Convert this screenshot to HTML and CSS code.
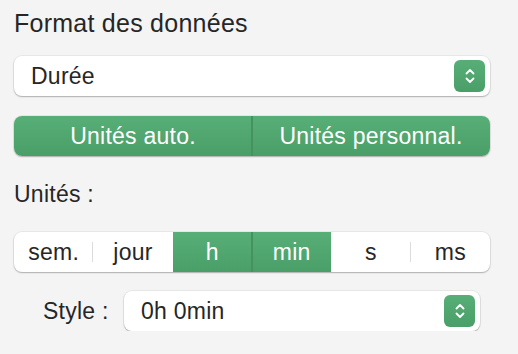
FILE: index.html
```html
<!DOCTYPE html>
<html>
<head>
    <meta charset="UTF-8">
    <title>Format des données</title>
    <link rel="stylesheet" href="styles.css">
</head>
<body>
    <div class="panel">
        <div class="section-title">Format des données</div>

        <div class="popup">
            <span class="popup-value">Durée</span>
            <span class="stepper">
                <svg width="14" height="20" viewBox="0 0 14 20"><path d="M3.5 7.5 L7 4 L10.5 7.5 M3.5 12.5 L7 16 L10.5 12.5" fill="none" stroke="#fff" stroke-width="1.8" stroke-linecap="round" stroke-linejoin="round"/></svg>
            </span>
        </div>

        <div class="segmented mode">
            <div class="seg on">Unités auto.</div>
            <div class="seg on">Unités personnal.</div>
        </div>

        <div class="label">Unités :</div>

        <div class="segmented units">
            <div class="seg">sem.</div>
            <div class="seg">jour</div>
            <div class="seg on">h</div>
            <div class="seg on">min</div>
            <div class="seg">s</div>
            <div class="seg">ms</div>
        </div>

        <div class="style-row">
            <span class="style-label">Style :</span>
            <div class="popup small">
                <span class="popup-value">0h 0min</span>
                <span class="stepper">
                    <svg width="14" height="20" viewBox="0 0 14 20"><path d="M3.5 7.5 L7 4 L10.5 7.5 M3.5 12.5 L7 16 L10.5 12.5" fill="none" stroke="#fff" stroke-width="1.8" stroke-linecap="round" stroke-linejoin="round"/></svg>
                </span>
            </div>
        </div>
    </div>
</body>
</html>
```

FILE: styles.css
```css
* {
    margin: 0;
    padding: 0;
    box-sizing: border-box;
}

body {
    font-family: 'Liberation Sans', Arial, sans-serif;
    color: #262626;
    background-color: #f4f4f4;
    letter-spacing: 0.25px;
    overflow: hidden;
}

.panel {
    display: flex;
    flex-direction: column;
    width: 476px;
    margin-left: 14px;
    padding-top: 10px;
}

.section-title {
    font-size: 25px;
    line-height: 26px;
}

.popup {
    display: flex;
    align-items: center;
    justify-content: space-between;
    height: 40px;
    margin-top: 20px;
    padding: 0 5px 0 17px;
    background-color: #fff;
    border-radius: 8px;
    box-shadow: 0 0 0 1px rgba(0, 0, 0, 0.05), 0 1px 1.5px rgba(0, 0, 0, 0.25);
    font-size: 23px;
}

.stepper {
    display: flex;
    align-items: center;
    justify-content: center;
    width: 31px;
    height: 32px;
    border-radius: 6px;
    background: linear-gradient(#58ae77, #4a9f68);
}

.segmented {
    display: flex;
    height: 40px;
    margin-top: 20px;
    background-color: #fff;
    border-radius: 8px;
    box-shadow: 0 0 0 1px rgba(0, 0, 0, 0.05), 0 1px 1.5px rgba(0, 0, 0, 0.25);
    overflow: hidden;
    font-size: 23px;
}

.seg {
    flex: 1;
    display: flex;
    align-items: center;
    justify-content: center;
    position: relative;
}

.seg + .seg::before {
    content: '';
    position: absolute;
    left: -1px;
    top: 10px;
    bottom: 10px;
    width: 1px;
    background-color: #dcdcdc;
}

.seg.on {
    color: #fff;
    background: linear-gradient(#58ae77, #4a9f68);
}

.seg.on + .seg::before,
.seg + .seg.on::before {
    display: none;
}

.seg.on + .seg.on::before {
    display: block;
    top: 0;
    bottom: 0;
    width: 2px;
    background-color: #46925f;
}

.label {
    font-size: 23px;
    line-height: 26px;
    margin-top: 25px;
}

.units {
    margin-top: 25px;
}

.style-row {
    display: flex;
    align-items: center;
    margin-top: 19px;
    padding-left: 29px;
    padding-right: 10px;
}

.style-label {
    font-size: 23px;
    width: 81px;
}

.popup.small {
    flex: 1;
    margin-top: 0;
}
```
